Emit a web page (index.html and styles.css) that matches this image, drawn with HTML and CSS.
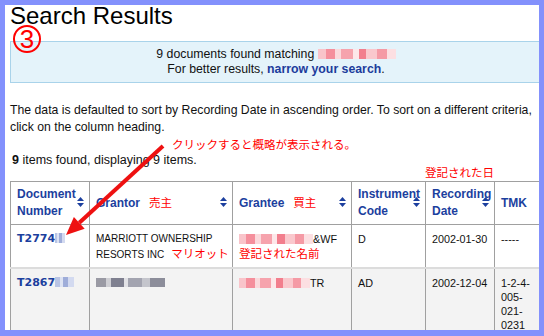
FILE: index.html
```html
<!DOCTYPE html>
<html lang="en">
<head>
    <meta charset="UTF-8">
    <title>Search Results</title>
    <link rel="stylesheet" href="styles.css">
</head>
<body>
    <div class="frame">
        <div class="content">
            <h1>Search Results</h1>

            <div class="info-box">
                9 documents found matching <span class="blur-pink blur-wide"></span><br>
                For better results, <a href="#">narrow your search</a>.
            </div>

            <p class="sort-note">The data is defaulted to sort by Recording Date in ascending order. To sort on a different criteria, click on the column heading.</p>

            <p class="item-count"><b>9</b> items found, displaying 9 items.</p>

            <table class="results">
                <colgroup>
                    <col class="c-doc">
                    <col class="c-grantor">
                    <col class="c-grantee">
                    <col class="c-inst">
                    <col class="c-date">
                    <col class="c-tmk">
                </colgroup>
                <thead>
                    <tr>
                        <th>Document<br>Number<span class="sort-icon"><svg width="7" height="10" viewBox="0 0 7 10"><path d="M0 4 L3.5 0 L7 4 Z M0 6 L7 6 L3.5 10 Z" fill="currentColor"/></svg></span></th>
                        <th>Grantor<span class="note-inline">売主</span><span class="sort-icon"><svg width="7" height="10" viewBox="0 0 7 10"><path d="M0 4 L3.5 0 L7 4 Z M0 6 L7 6 L3.5 10 Z" fill="currentColor"/></svg></span></th>
                        <th>Grantee<span class="note-inline">買主</span><span class="sort-icon"><svg width="7" height="10" viewBox="0 0 7 10"><path d="M0 4 L3.5 0 L7 4 Z M0 6 L7 6 L3.5 10 Z" fill="currentColor"/></svg></span></th>
                        <th>Instrument<br>Code<span class="sort-icon"><svg width="7" height="10" viewBox="0 0 7 10"><path d="M0 4 L3.5 0 L7 4 Z M0 6 L7 6 L3.5 10 Z" fill="currentColor"/></svg></span></th>
                        <th>Recording<br>Date<span class="sort-icon"><svg width="7" height="10" viewBox="0 0 7 10"><path d="M0 4 L3.5 0 L7 4 Z M0 6 L7 6 L3.5 10 Z" fill="currentColor"/></svg></span></th>
                        <th>TMK</th>
                    </tr>
                </thead>
                <tbody>
                    <tr>
                        <td class="doc-no">T2774<span class="blur-blue blur-s"></span></td>
                        <td class="party">MARRIOTT OWNERSHIP<br><span class="nowrap">RESORTS INC<span class="note-inline">マリオット</span></span></td>
                        <td><span class="blur-pink blur-m"></span>&amp;WF<br><span class="note">登記された名前</span></td>
                        <td>D</td>
                        <td>2002-01-30</td>
                        <td>-----</td>
                    </tr>
                    <tr class="alt">
                        <td class="doc-no">T2867<span class="blur-blue blur-l"></span></td>
                        <td class="party"><span class="blur-gray"></span></td>
                        <td><span class="blur-pink blur-n"></span>TR</td>
                        <td>AD</td>
                        <td>2002-12-04</td>
                        <td>1-2-4-005-021-0231</td>
                    </tr>
                </tbody>
            </table>
        </div>

        <!-- annotations drawn over the page -->
        <span class="circled">3</span>
        <span class="note note-click">クリックすると概略が表示される。</span>
        <span class="note note-date">登記された日</span>
        <svg class="arrow" width="110" height="100" viewBox="0 0 110 100">
            <line x1="103" y1="6" x2="19.3" y2="82.8" stroke="#ee1111" stroke-width="4"/>
            <polygon points="6,95 24.7,88.7 13.9,76.9" fill="#ee1111"/>
        </svg>
    </div>
</body>
</html>
```

FILE: styles.css
```css
* {
    box-sizing: border-box;
}

body {
    margin: 0;
    height: 336px;
    background-color: #8391fc;
    font-family: "Liberation Sans", Arial, sans-serif;
    font-size: 12px;
    color: #111;
    overflow: hidden;
}

.frame {
    position: relative;
    margin: 5px 5px 0 5px;
    height: 325px;
    background-color: white;
    overflow: hidden;
    padding-left: 5px;
}

.content {
    width: 560px;
}

h1 {
    margin: -3px 0 0;
    font-size: 24px;
    font-weight: normal;
    line-height: 28px;
    color: #000;
}

.info-box {
    margin-top: 11px;
    width: 532px;
    padding: 5px 0;
    border: 1px solid #a9d3ea;
    background-color: #e4f3fa;
    text-align: center;
    font-size: 12.3px;
    line-height: 15px;
}

.info-box a {
    color: #1c3c9c;
    font-weight: bold;
    text-decoration: none;
}

.sort-note {
    margin: 19px 0 0;
    width: 532px;
    font-size: 12.25px;
    line-height: 17px;
}

.item-count {
    margin: 16px 0 0;
    padding-left: 2px;
    font-size: 12.5px;
    line-height: 16px;
}

/* blurred-out private values */
.blur-pink,
.blur-blue,
.blur-gray {
    display: inline-block;
    height: 10px;
    vertical-align: -1px;
}

.blur-pink {
    background: linear-gradient(90deg, #f9c4ca 0 10%, #f58f9c 10% 22%, #fbd9dc 22% 30%, #f6a3ad 30% 45%, #fde7e9 45% 52%, #f27e8d 52% 62%, #fac8cd 62% 76%, #f59aa5 76% 88%, #fcdfe2 88% 100%);
}

.blur-wide { width: 78px; }
.blur-m { width: 74px; }
.blur-n { width: 71px; }

.blur-blue {
    background: linear-gradient(90deg, #b9c4e4 0 25%, #dde3f3 25% 40%, #9fadd9 40% 70%, #d3daf0 70% 100%);
}

.blur-s { width: 10px; }
.blur-l { width: 19px; }

.blur-gray {
    width: 69px;
    height: 9px;
    background: linear-gradient(90deg, #9a9aa4 0 14%, #cfcfd4 14% 22%, #7f8090 22% 40%, #e2e2e6 40% 46%, #a3a4b0 46% 66%, #c4c5cc 66% 78%, #8c8d9a 78% 100%);
}

/* results table */
.results {
    margin-top: 13px;
    width: 539px;
    table-layout: fixed;
    border-collapse: collapse;
}

.c-doc { width: 79px; }
.c-grantor { width: 143px; }
.c-grantee { width: 119px; }
.c-inst { width: 74px; }
.c-date { width: 69px; }
.c-tmk { width: 55px; }

.results th,
.results td {
    border-left: 1px solid #a0a0a0;
    border-right: 1px solid #a0a0a0;
    text-align: left;
}

.results th {
    position: relative;
    padding: 4px 6px;
    border-top: 1px solid #a0a0a0;
    border-bottom: 1px solid #a0a0a0;
    font-size: 12px;
    line-height: 17px;
    font-weight: bold;
    color: #1c3f9e;
    vertical-align: middle;
}

.results td {
    padding: 7px 6px 5px;
    border-bottom: 2px solid #dcdcdc;
    font-size: 10.8px;
    line-height: 14px;
    vertical-align: top;
    color: #111;
}

.results td.party {
    font-size: 10px;
}

.results tr.alt td {
    background-color: #f3f3f3;
    padding-bottom: 20px;
}

.results td.doc-no {
    font-family: "DejaVu Sans", Verdana, sans-serif;
    font-size: 11px;
    font-weight: bold;
    color: #1c3f9e;
}

.nowrap {
    white-space: nowrap;
}

.sort-icon {
    position: absolute;
    right: 5px;
    top: 50%;
    margin-top: -6px;
    height: 10px;
    line-height: 0;
    color: #1c3f9e;
}

/* red hand-written notes */
.note,
.note-inline {
    font-family: "Noto Sans CJK JP", sans-serif;
    font-size: 11.5px;
    font-weight: normal;
    color: #ff0000;
}

.note-inline {
    margin-left: 9px;
}

.party .note-inline {
    margin-left: 7px;
}

.note-click {
    position: absolute;
    left: 167px;
    top: 133px;
    line-height: 13px;
}

.note-date {
    position: absolute;
    left: 420px;
    top: 161px;
    line-height: 13px;
}

.circled {
    position: absolute;
    left: 8px;
    top: 20px;
    width: 28px;
    height: 28px;
    border: 2px solid #ff0000;
    border-radius: 50%;
    color: #ff0000;
    font-size: 26px;
    line-height: 24px;
    text-align: center;
}

.arrow {
    position: absolute;
    left: 55px;
    top: 135px;
}
```
